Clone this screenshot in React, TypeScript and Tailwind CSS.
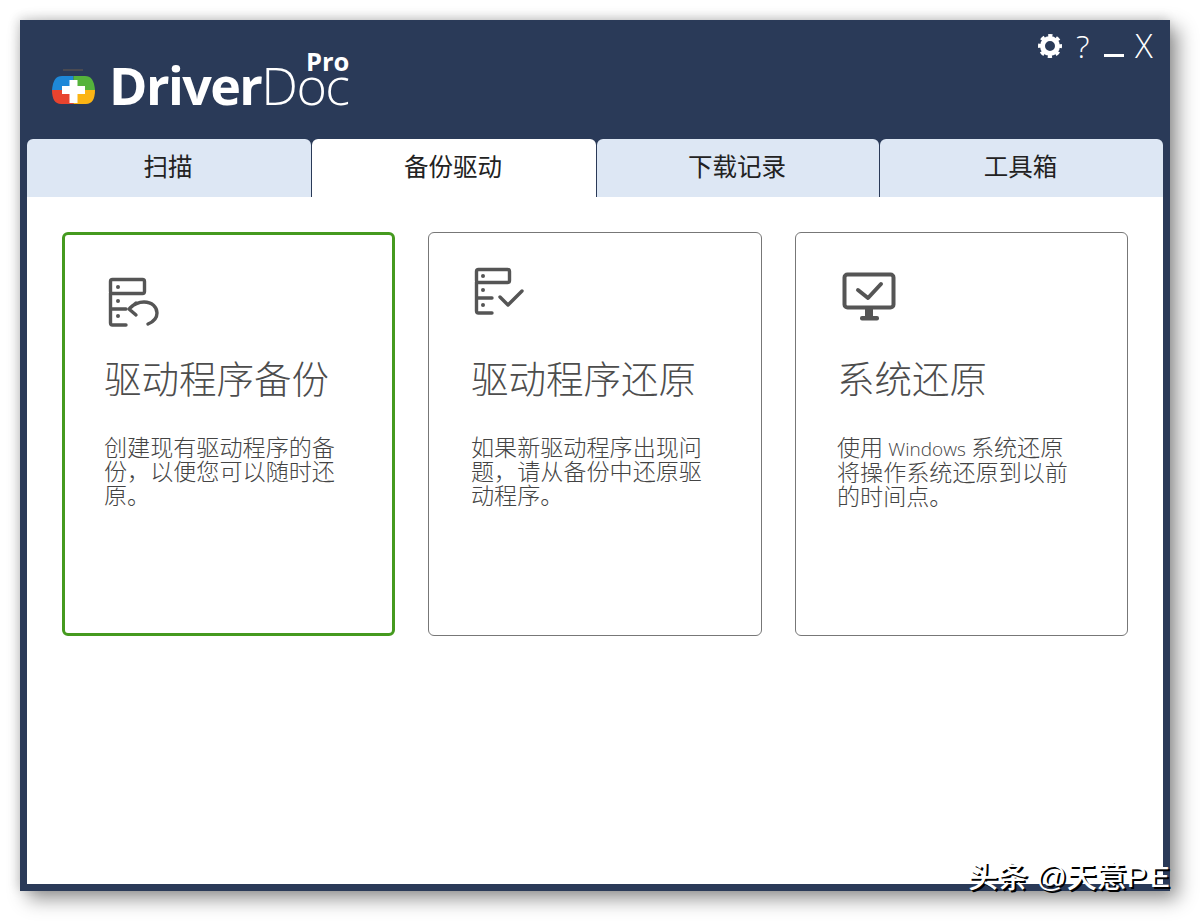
const cjk = "font-['Noto_Sans_CJK_SC','Noto_Sans',sans-serif]";

function BackupIcon() {
  return (
    <svg viewBox="0 0 60 70" className="w-[60px] h-[70px]" fill="none" stroke="#555" strokeWidth="3.4" strokeLinecap="round" strokeLinejoin="round">
      <rect x="5.500" y="17.500" width="34" height="14" rx="2" />
      <path d="M5.500 31V61a2 2 0 0 0 2 2H21M5.500 47H21" />
      <circle cx="13" cy="25" r="2" fill="#555" stroke="none" />
      <circle cx="13" cy="39" r="2" fill="#555" stroke="none" />
      <circle cx="13" cy="54" r="2" fill="#555" stroke="none" />
      <path d="M31 41L24 47L31 53M25 46C29 42 34 40 39 40C47 40 52 45 52 51C52 56 48 60 43 62" />
    </svg>
  );
}

function RestoreIcon() {
  return (
    <svg viewBox="0 0 60 70" className="w-[60px] h-[70px]" fill="none" stroke="#555" strokeWidth="3.4" strokeLinecap="round" strokeLinejoin="round">
      <rect x="5.500" y="7.500" width="33" height="13" rx="2" />
      <path d="M5.500 20V49a2 2 0 0 0 2 2H21M5.500 36H21" />
      <circle cx="12" cy="14" r="2" fill="#555" stroke="none" />
      <circle cx="12" cy="28" r="2" fill="#555" stroke="none" />
      <circle cx="12" cy="43" r="2" fill="#555" stroke="none" />
      <path d="M29 35L37 43L51 29" />
    </svg>
  );
}

function MonitorIcon() {
  return (
    <svg viewBox="0 0 60 70" className="w-[60px] h-[70px]" fill="none" stroke="#555" strokeWidth="4" strokeLinecap="round" strokeLinejoin="round">
      <rect x="6.500" y="12.500" width="49" height="33" rx="3" />
      <path d="M20 28L30 36L43 22" />
      <rect x="27" y="47" width="8" height="8" fill="#555" stroke="none" />
      <rect x="22" y="54" width="19" height="4.500" rx="2" fill="#555" stroke="none" />
    </svg>
  );
}

function LogoMark() {
  return (
    <svg viewBox="0 0 44 36" className="w-[44px] h-[36px]">
      <path d="M11 1H31" fill="none" stroke="#6b5a4a" strokeWidth="1" />
      <path d="M21.500 7H10C4 7 1 11 0 21H21.500Z" fill="#1e88d8" />
      <path d="M21.500 7H33C39 7 42 11 43 21H21.500Z" fill="#55b33b" />
      <path d="M21.500 21H0C0 30 3 35 9 35H21.500Z" fill="#e8432e" />
      <path d="M21.500 21H43C43 30 40 35 34 35H21.500Z" fill="#fbb414" />
      <path d="M17.500 11H25.500V17H33V25H25.500V34H17.500V25H10V17H17.500Z" fill="#fff" />
    </svg>
  );
}

function Gear() {
  return (
    <svg viewBox="0 0 24 24" className="w-[24px] h-[24px]" fill="none" stroke="#fff">
      <circle cx="12" cy="12" r="7.500" strokeWidth="5" />
      <circle cx="12" cy="12" r="10.500" strokeWidth="3" strokeDasharray="4.250 3.997" strokeDashoffset="2.125" />
    </svg>
  );
}

const cards = [
  {
    icon: <BackupIcon />,
    title: "驱动程序备份",
    body: <>创建现有驱动程序的备份，以便您可以随时还原。</>,
    box: "border-[3px] border-[#459a1f] pl-[40px] pt-[27px]",
    shift: "-ml-[1px]",
  },
  {
    icon: <RestoreIcon />,
    title: "驱动程序还原",
    body: <>如果新驱动程序出现问题，请从备份中还原驱动程序。</>,
    box: "border border-[#777] pl-[42px] pt-[29px]",
    shift: "ml-0",
  },
  {
    icon: <MonitorIcon />,
    title: "系统还原",
    body: (
      <>
        使用 <span className="text-[19px] leading-[20px] font-['Open_Sans',sans-serif]">Windows</span> 系统还原将操作系统还原到以前的时间点。
      </>
    ),
    box: "border border-[#777] pl-[42px] pt-[29px]",
    shift: "-ml-[1px]",
  },
];

const tabs = ["扫描", "备份驱动", "下载记录", "工具箱"];

export default function App() {
  return (
    <div className={`relative w-[1200px] h-[921px] bg-white pt-[20px] pl-[20px] overflow-hidden ${cjk}`}>
      <div className="w-[1150px] h-[871px] bg-[#2a3a58] flex flex-col px-[7px] pb-[7px] shadow-[8px_8px_18px_rgba(0,0,0,0.42),-2px_-2px_10px_rgba(0,0,0,0.15)]">
        <div className="h-[119px] flex justify-between items-start">
          <div className="flex items-start pl-[25px] pt-[28px]">
            <div className="mt-[21px]">
              <LogoMark />
            </div>
            <div className="relative ml-[13px] mt-[1px] flex text-white font-['Open_Sans',sans-serif] text-[52px] leading-[72px] tracking-[-1.600px]">
              <span className="font-bold">Driver</span>
              <span className="font-light">Doc</span>
              <span className="absolute right-[-1px] top-[-5px] text-[25.500px] leading-[34px] font-bold tracking-[0px]">Pro</span>
            </div>
          </div>
          <div className="flex items-center text-white font-['Open_Sans',sans-serif] font-light pt-[10px] pr-[8px]">
            <Gear />
            <span className="ml-[14px] w-[15px] text-[32px] leading-[32px]">?</span>
            <span className="ml-[13px] w-[20px] h-[3px] bg-white mt-[18px]" />
            <span className="ml-[11px] w-[20px] text-[33px] leading-[32px]">X</span>
          </div>
        </div>

        <div className="grid grid-cols-[284px_284px_282px_283px] gap-px h-[58px] text-[24.500px] text-[#222]">
          {tabs.map((t, i) => (
            <div
              key={t}
              className={`flex items-center justify-center rounded-t-[6px] pb-[4px] pr-[2px] ${i === 1 ? "bg-white" : "bg-[#dde7f4]"}`}
            >
              {t}
            </div>
          ))}
        </div>

        <div className="flex-1 bg-white grid grid-cols-[333px_334px_333px] gap-[33px] pl-[35px] pt-[35px] items-start">
          {cards.map((c) => (
            <div key={c.title} className={`h-[404px] bg-white rounded-[6px] ${c.box}`}>
              {c.icon}
              <div className={`mt-[22px] text-[37.500px] leading-[46px] text-[#4d4d4d] font-light ${c.shift}`}>{c.title}</div>
              <div className={`mt-[34px] w-[240px] text-[23.100px] leading-[24px] text-[#444] font-light ${c.shift}`}>{c.body}</div>
            </div>
          ))}
        </div>
      </div>
      <div className="absolute left-[968px] top-[857px] text-[30px] leading-[40px] font-medium text-white whitespace-nowrap font-['Liberation_Sans','Noto_Sans_CJK_SC',sans-serif] [text-shadow:2px_2px_0_#000]">
        头条 @天意<span className="tracking-[3px]">PE</span>
      </div>
    </div>
  );
}
